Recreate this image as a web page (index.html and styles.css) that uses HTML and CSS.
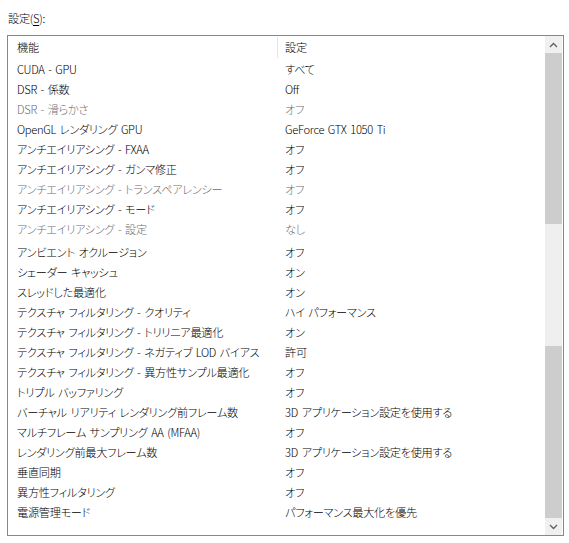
FILE: index.html
```html
<!DOCTYPE html>
<html lang="ja">
<head>
<meta charset="utf-8">
<title>設定</title>
<link rel="stylesheet" href="styles.css">
</head>
<body>
<div class="label">設定(<u>S</u>):</div>
<div class="listbox">
  <div class="list">
    <div class="header">
      <div class="c1">機能</div>
      <div class="c2">設定</div>
    </div>
    <div class="row"><div class="c1">CUDA - GPU</div><div class="c2">すべて</div></div>
    <div class="row"><div class="c1">DSR - 係数</div><div class="c2">Off</div></div>
    <div class="row dis"><div class="c1">DSR - 滑らかさ</div><div class="c2">オフ</div></div>
    <div class="row"><div class="c1">OpenGL レンダリング GPU</div><div class="c2">GeForce GTX 1050 Ti</div></div>
    <div class="row"><div class="c1">アンチエイリアシング - FXAA</div><div class="c2">オフ</div></div>
    <div class="row"><div class="c1">アンチエイリアシング - ガンマ修正</div><div class="c2">オフ</div></div>
    <div class="row dis"><div class="c1">アンチエイリアシング - トランスペアレンシー</div><div class="c2">オフ</div></div>
    <div class="row"><div class="c1">アンチエイリアシング - モード</div><div class="c2">オフ</div></div>
    <div class="row dis gapafter"><div class="c1">アンチエイリアシング - 設定</div><div class="c2">なし</div></div>
    <div class="row"><div class="c1">アンビエント オクルージョン</div><div class="c2">オフ</div></div>
    <div class="row"><div class="c1">シェーダー キャッシュ</div><div class="c2">オン</div></div>
    <div class="row"><div class="c1">スレッドした最適化</div><div class="c2">オン</div></div>
    <div class="row"><div class="c1">テクスチャ フィルタリング - クオリティ</div><div class="c2">ハイ パフォーマンス</div></div>
    <div class="row"><div class="c1">テクスチャ フィルタリング - トリリニア最適化</div><div class="c2">オン</div></div>
    <div class="row"><div class="c1">テクスチャ フィルタリング - ネガティブ LOD バイアス</div><div class="c2">許可</div></div>
    <div class="row"><div class="c1">テクスチャ フィルタリング - 異方性サンプル最適化</div><div class="c2">オフ</div></div>
    <div class="row"><div class="c1">トリプル バッファリング</div><div class="c2">オフ</div></div>
    <div class="row"><div class="c1">バーチャル リアリティ レンダリング前フレーム数</div><div class="c2">3D アプリケーション設定を使用する</div></div>
    <div class="row"><div class="c1">マルチフレーム サンプリング AA (MFAA)</div><div class="c2">オフ</div></div>
    <div class="row"><div class="c1">レンダリング前最大フレーム数</div><div class="c2">3D アプリケーション設定を使用する</div></div>
    <div class="row"><div class="c1">垂直同期</div><div class="c2">オフ</div></div>
    <div class="row"><div class="c1">異方性フィルタリング</div><div class="c2">オフ</div></div>
    <div class="row"><div class="c1">電源管理モード</div><div class="c2">パフォーマンス最大化を優先</div></div>
  </div>
  <div class="scrollbar">
    <div class="arrow">
      <svg width="9" height="6" viewBox="0 0 9 6"><path d="M1 5 L4.5 1.5 L8 5" fill="none" stroke="#606060" stroke-width="1.3"/></svg>
    </div>
    <div class="track">
      <div class="seg thumb1"></div>
      <div class="seg ghost"></div>
      <div class="seg thumb2"></div>
    </div>
    <div class="arrow">
      <svg width="9" height="6" viewBox="0 0 9 6"><path d="M1 1 L4.5 4.5 L8 1" fill="none" stroke="#606060" stroke-width="1.3"/></svg>
    </div>
  </div>
</div>
</body>
</html>
```
FILE: styles.css
```css
html, body {
  margin: 0;
  padding: 0;
  background: #ffffff;
}
body {
  font-family: "Noto Sans CJK JP", "Noto Sans", sans-serif;
  font-size: 11.2px;
  font-weight: 300;
  letter-spacing: -0.3px;
  word-spacing: 1.5px;
  font-feature-settings: "palt";
  color: #000;
}
.label {
  padding: 10px 0 0 8px;
  height: 16px;
  line-height: 16px;
}
.label u {
  text-underline-offset: 2px;
}
.listbox {
  margin: 9px 0 0 7px;
  width: 555px;
  height: 499px;
  border: 1px solid #828790;
  display: flex;
}
.list {
  flex: 1;
  display: flex;
  flex-direction: column;
}
.header {
  display: flex;
  height: 23px;
  line-height: 23px;
}
.header .c2 {
  border-left: 1px solid #e5e5e5;
  height: 21px;
  margin-top: 1px;
  line-height: 21px;
}
.row {
  display: flex;
  height: 20px;
  line-height: 20px;
  white-space: nowrap;
}
.row.gapafter {
  margin-bottom: 3px;
}
.c1 {
  width: 260px;
  padding-left: 9px;
  flex: none;
}
.c2 {
  padding-left: 7px;
}
.row .c2 {
  padding-left: 8px;
}
.dis {
  color: #6d6d6d;
}
.scrollbar {
  width: 17px;
  background: #f0f0f0;
  display: flex;
  flex-direction: column;
  margin-right: 1px;
}
.arrow {
  height: 17px;
  display: flex;
  align-items: center;
  justify-content: center;
  flex: none;
}
.track {
  flex: 1;
  display: flex;
  flex-direction: column;
}
.seg.thumb1 {
  height: 171px;
  background: #cdcdcd;
}
.seg.ghost {
  height: 122px;
  background: #efefef;
}
.seg.thumb2 {
  flex: 1;
  background: #cdcdcd;
}
```
